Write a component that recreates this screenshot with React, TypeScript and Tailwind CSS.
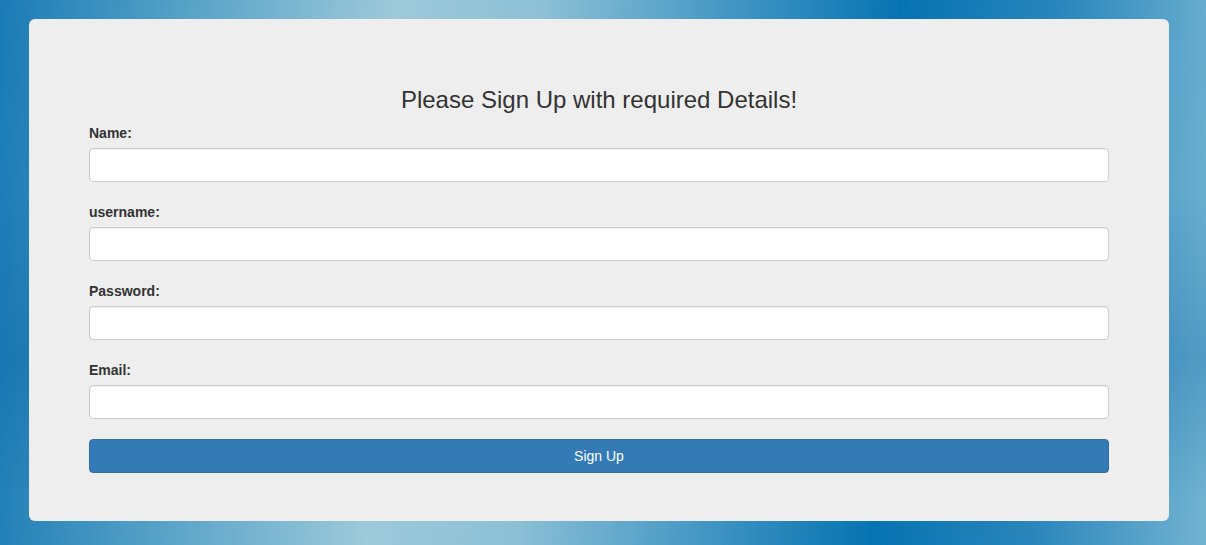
import { useState } from 'react'

const fields = [
  { id: 'name', label: 'Name:', type: 'text' },
  { id: 'username', label: 'username:', type: 'text' },
  { id: 'password', label: 'Password:', type: 'password' },
  { id: 'email', label: 'Email:', type: 'email' },
]

export default function App() {
  const [values, setValues] = useState<Record<string, string>>({})

  return (
    <div className="relative min-h-screen bg-[linear-gradient(93deg,#1a7bb5_0%,#5aa4c8_16%,#9dc9da_32%,#8cc0d6_44%,#3f94c3_60%,#0673b1_73%,#2a86bc_86%,#72b3d1_100%)] font-['Liberation_Sans',Arial,sans-serif]">
      <div className="absolute inset-0 bg-[linear-gradient(180deg,rgba(0,80,150,0)_35%,rgba(0,90,160,0.25)_66%,rgba(0,80,150,0)_92%)]" />
      <div className="relative flex pt-[19px] pb-[24px] pl-[29px]">
        <form
          onSubmit={(e) => e.preventDefault()}
          className="w-[1140px] rounded-[6px] bg-[#eee] px-[60px] pt-[68px] pb-[48px]"
        >
          <h3 className="mb-[10px] text-center text-[24px] leading-[1.1] text-[#333]">
            Please Sign Up with required Details!
          </h3>
          {fields.map((f) => (
            <div key={f.id} className="mb-[20px]">
              <label
                htmlFor={f.id}
                className="mb-[5px] block text-[14px] leading-[20px] font-bold text-[#333]"
              >
                {f.label}
              </label>
              <input
                id={f.id}
                type={f.type}
                value={values[f.id] ?? ''}
                onChange={(e) => setValues({ ...values, [f.id]: e.target.value })}
                className="block h-[34px] w-full rounded-[4px] border border-[#ccc] bg-white px-3 text-[14px] text-[#555] shadow-[inset_0_1px_1px_rgba(0,0,0,0.075)] outline-none"
              />
            </div>
          ))}
          <button
            type="submit"
            className="block h-[34px] w-full rounded-[4px] border border-[#2e6da4] bg-[#337ab7] text-[14px] leading-[20px] text-white"
          >
            Sign Up
          </button>
        </form>
      </div>
    </div>
  )
}
